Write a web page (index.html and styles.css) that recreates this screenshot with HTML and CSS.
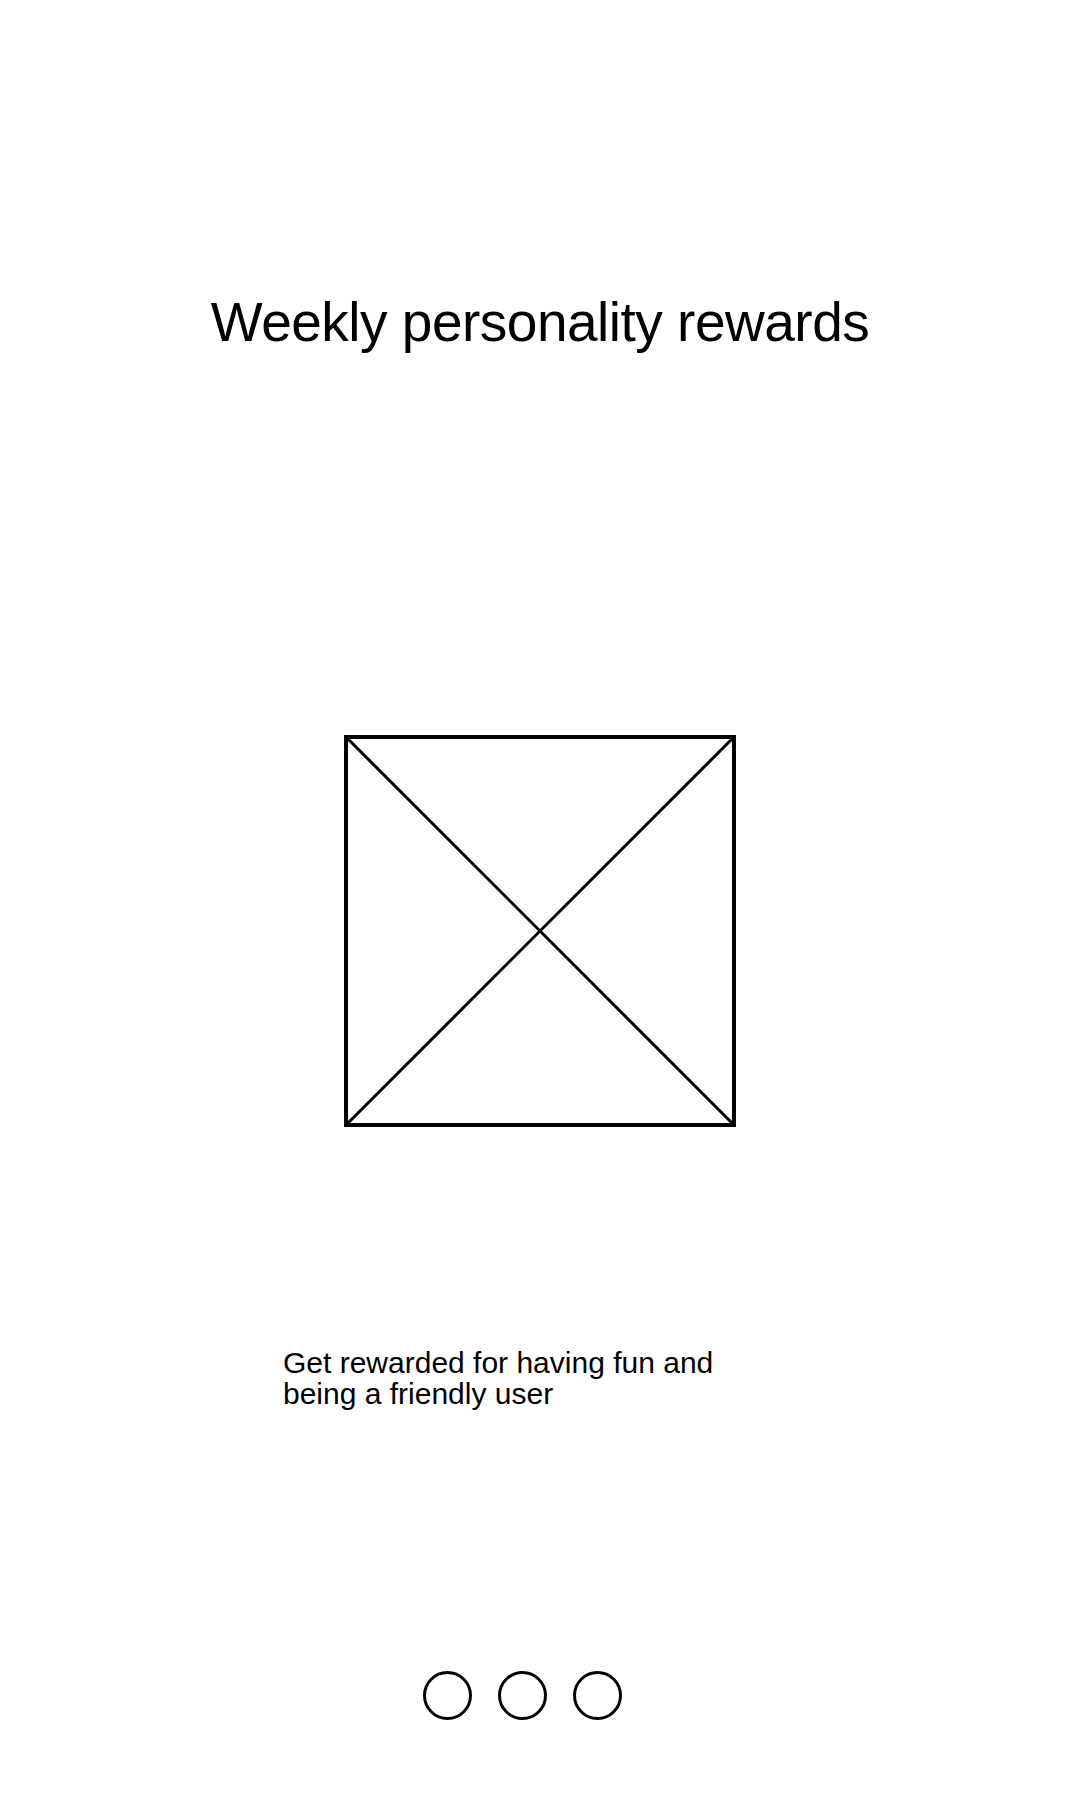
FILE: index.html
```html
<!DOCTYPE html>
<html lang="en">
<head>
<meta charset="utf-8">
<title>Weekly personality rewards</title>
<link rel="stylesheet" href="styles.css">
</head>
<body>
<main class="screen">
  <h1 class="title">Weekly personality rewards</h1>
  <div class="figure">
    <svg width="392" height="392" viewBox="0 0 392 392" xmlns="http://www.w3.org/2000/svg">
      <line x1="2" y1="2" x2="390" y2="390" stroke="#000" stroke-width="3"/>
      <line x1="390" y1="2" x2="2" y2="390" stroke="#000" stroke-width="3"/>
      <rect x="2" y="2" width="388" height="388" fill="none" stroke="#000" stroke-width="4"/>
    </svg>
  </div>
  <p class="caption">Get rewarded for having fun and being a friendly user</p>
  <div class="dots">
    <span class="dot"></span>
    <span class="dot"></span>
    <span class="dot"></span>
  </div>
</main>
</body>
</html>
```

FILE: styles.css
```css
html, body {
  margin: 0;
  padding: 0;
  background: #fff;
}

body {
  font-family: "Liberation Sans", Arial, sans-serif;
  color: #000;
}

.screen {
  width: 1080px;
  height: 1800px;
  display: flex;
  flex-direction: column;
}

.title {
  margin: 0;
  padding-top: 290px;
  font-size: 55px;
  line-height: 64px;
  letter-spacing: -0.5px;
  font-weight: normal;
  text-align: center;
}

.figure {
  margin-top: 381px;
  align-self: center;
  width: 392px;
  height: 392px;
}

.figure svg {
  display: block;
}

.caption {
  margin: 220px 0 0 283px;
  width: 445px;
  font-size: 30px;
  line-height: 31px;
}

.dots {
  margin: 262px 0 0 423px;
  display: flex;
  gap: 26px;
}

.dot {
  width: 49px;
  height: 49px;
  box-sizing: border-box;
  border: 3px solid #000;
  border-radius: 50%;
}
```
